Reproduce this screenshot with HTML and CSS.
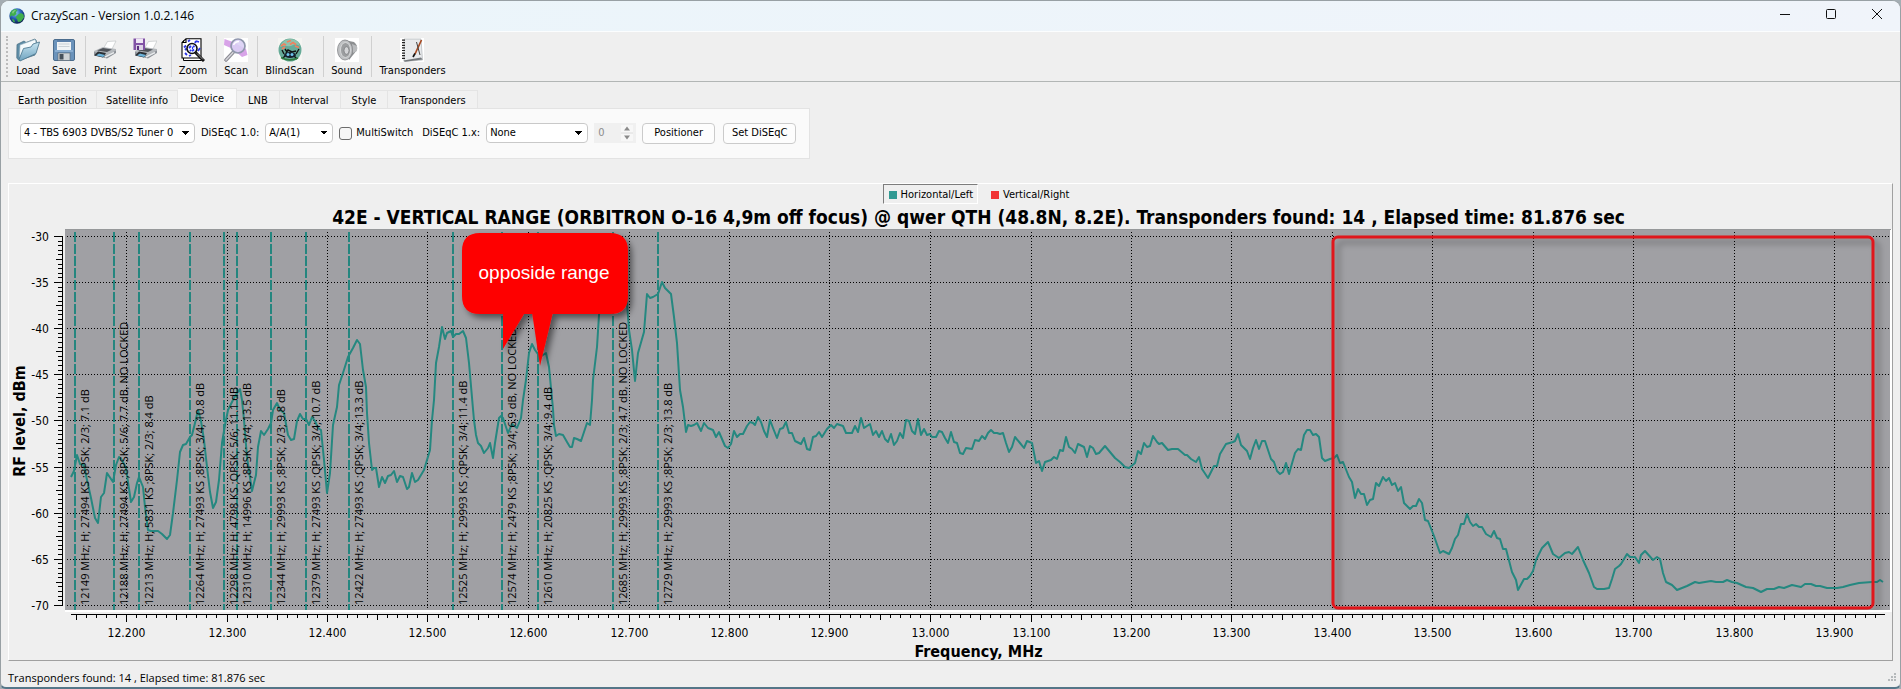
FILE: index.html
```html
<!DOCTYPE html>
<html lang="en">
<head>
<meta charset="utf-8">
<title>CrazyScan - Version 1.0.2.146</title>
<link rel="stylesheet" href="styles.css">
</head>
<body>
<div class="window">
  <header class="titlebar">
    <svg class="app-icon" viewBox="0 0 16 16" aria-hidden="true">
      <defs><radialGradient id="globe" cx=".4" cy=".3" r=".7"><stop offset="0" stop-color="#8fd0f0"/><stop offset=".5" stop-color="#2a64b8"/><stop offset="1" stop-color="#0b1f52"/></radialGradient></defs>
      <circle cx="8" cy="8" r="7.7" fill="url(#globe)"/>
      <path d="M2 3.500Q4 .8 7 1L8.500 2.500 7 4 7.500 6 5 8 2.500 7.500 1 9Q.3 6 2 3.500ZM9 6.500l3-1.500 2.500 1.500.5 3-3 4-3 .5-1-3-1.500-1.500ZM3 11l2 .5 1 2.500-1 .6Q3.500 13.500 3 11Z" fill="#3fae4c"/>
      <path d="M3 4Q5 1.500 7 2L5 4 4 6Z" fill="#a8dca0" opacity=".7"/>
    </svg>
    <h1 class="app-title">CrazyScan - Version 1.0.2.146</h1>
    <div class="window-controls">
      <button class="win-btn" type="button" aria-label="Minimize"><svg viewBox="0 0 10 10"><path d="M0 5.500H10"/></svg></button>
      <button class="win-btn" type="button" aria-label="Maximize"><svg viewBox="0 0 10 10"><rect x=".5" y=".5" width="9" height="9" rx="1"/></svg></button>
      <button class="win-btn" type="button" aria-label="Close"><svg viewBox="0 0 10 10"><path d="M0 0 10 10M10 0 0 10"/></svg></button>
    </div>
  </header>

  <nav class="toolbar" aria-label="Main toolbar">
    <span class="grip"></span>
    <button class="tool" type="button">
      <svg viewBox="0 0 24 24"><defs><linearGradient id="fold" x2="0" y2="1"><stop offset="0" stop-color="#c9e6f2"/><stop offset="1" stop-color="#6fa3bf"/></linearGradient></defs>
        <path d="M1 6.500 8 3l2 1.500 9-3.500 1.500 2L19 17 3 22.500.8 20Z" fill="#5f8ea8" stroke="#4c7287" stroke-width=".8"/>
        <path d="M4 7 19 1.500 20 4 18 15 3.500 19Z" fill="#f5fafc" stroke="#9ab4c0" stroke-width=".6"/>
        <path d="M3 21.500 7.500 10.500 15 9 17 6 23.500 4 20 15.500 4 23Z" fill="url(#fold)" stroke="#527d94" stroke-width=".9"/></svg>
      <span>Load</span></button>
    <button class="tool" type="button">
      <svg viewBox="0 0 24 24"><rect x="1.500" y="1.500" width="21" height="21" rx="1.500" fill="#6b93bb" stroke="#4b6c8d"/>
        <rect x="5" y="2" width="14" height="10" fill="#f0f3f5"/><path d="M5 3H19" stroke="#5b7fa8" stroke-width="2"/><path d="M6.500 6h11M6.500 8.500h11" stroke="#c0c8ce" stroke-width=".8"/>
        <path d="M3 13h18" stroke="#a9c8e6"/><rect x="6" y="15" width="12" height="7.500" fill="#cfd3d6" stroke="#55616b" stroke-width=".6"/><rect x="7.500" y="16" width="4" height="5.500" fill="#46505a"/></svg>
      <span>Save</span></button>
    <span class="sep"></span>
    <button class="tool" type="button">
      <svg viewBox="0 0 24 24"><g id="printer"><path d="M9 13 14.500 3.500 23 3 18.500 12Z" fill="#fff" stroke="#b9bdc0" stroke-width=".6"/><path d="M1 13 10 9 23 11 23 14 14 20 1 16Z" fill="#b4b8bc"/><path d="M4 12.500 10 10 19 11.500 14 14Z" fill="#50545a"/><path d="M1 14 14 17 23 12.500V15L14 20.500 1 17Z" fill="#8d9298"/><path d="M5 13.500 13 15 10 19.500 1 17.500Z" fill="#2a2e33"/><path d="M6 15.500 12 17 10 19 3 17.500Z" fill="#6bb2d8"/><path d="M12 19 21 14.500" stroke="#e6e8ea" stroke-width="1.500"/></g></svg>
      <span>Print</span></button>
    <button class="tool" type="button">
      <svg viewBox="0 0 24 24"><use href="#printer" x="1"/><path d="M.5.5H12V12H.5Z" fill="#8152a5"/><rect x="3" y=".5" width="7" height="4.500" fill="#efe6f5"/><rect x="3" y="7" width="7" height="5" fill="#dcd2e5"/><rect x="4" y="8" width="2" height="4" fill="#5b2f80"/></svg>
      <span>Export</span></button>
    <span class="sep"></span>
    <button class="tool" type="button">
      <svg viewBox="0 0 24 24"><path d="M2.500 2.500V22.500H20.500V20" fill="#fff" stroke="#000"/><path d="M5 .7H20V20H1V4.500ZM1 4.500H5V.7" fill="#fff" stroke="#000" stroke-width="1.100"/><path d="M7 3.500l2-1.500M15 3l3 1M3 9.500l2-2M4 15l2 2M8 18l2-1M17 13l2-3M14 5l1-2M4 12l1.500-1.500" stroke="#2b35e8" stroke-width="1.800"/><circle cx="11" cy="10.500" r="5" fill="#eef3ff" stroke="#111" stroke-width="1.600"/><path d="M8 10l2-2M11 13l2-1.500M12 8l1.500 1M9 12l1 1M11 10h1" stroke="#2734ee" stroke-width="1.800"/><path d="M14.500 14.500 23 23" stroke="#111" stroke-width="3"/><path d="M16 15.500 22 21.500" stroke="#a9a9a9" stroke-width=".9"/></svg>
      <span>Zoom</span></button>
    <span class="sep"></span>
    <button class="tool" type="button">
      <svg viewBox="0 0 24 24"><rect width="24" height="24" fill="#fff"/><path d="M.5 1 9 4 22 11 23.500 17 18 19 9 11 0 7Z" fill="#d8a3e8"/><path d="M9 14.500 2 22" stroke="#8c8c94" stroke-width="3.600" stroke-linecap="round"/><path d="M9 14.500 2 22" stroke="#d6d6dc" stroke-width="1.400" stroke-linecap="round"/><circle cx="14" cy="8" r="7" fill="#d9cff4" fill-opacity=".88" stroke="#9097ad" stroke-width="1.700"/><path d="M9.500 7Q11 3.500 15 3.500" fill="none" stroke="#fff" stroke-width="1.500"/></svg>
      <span>Scan</span></button>
    <span class="sep"></span>
    <button class="tool" type="button">
      <svg viewBox="0 0 24 24"><rect width="24" height="24" fill="#f5f5f2"/><circle cx="12" cy="12" r="11.500" fill="#66aa98"/><path d="M2 9Q5 1 12 1Q20 1 22 8Q18 5 15 7T9 8T2 9Z" fill="#8ec3ae"/><path d="M3 8l3-2 2 1M9 4l4-1.500M12 6.500l3-2 3 2M17 8l4 1.500M4 11l3-2" stroke="#ef805f" stroke-width="1.800" fill="none"/><path d="M6 16l-2-4M8 15l2-3 4 2 4-1M18 16l3-5M7 18l-3 3M16 18l3 3M9 14l-2-3" stroke="#111" stroke-width="1.400" fill="none"/><ellipse cx="12" cy="17" rx="6" ry="3" fill="#15202c"/><circle cx="10" cy="16.500" r="1.500" fill="#6fc5ef"/><circle cx="14" cy="16.500" r="1.500" fill="#6fc5ef"/><path d="M3 19.500Q11 24 20 20" stroke="#2f7a3f" stroke-width="1.600" fill="none"/></svg>
      <span>BlindScan</span></button>
    <span class="sep"></span>
    <button class="tool" type="button">
      <svg viewBox="0 0 24 24"><rect width="24" height="24" fill="#fff"/><path d="M9 2 19 4Q23 7 22 12L14 22Z" fill="#8d8f91"/><path d="M17 6l5 2v5l-4 2Z" fill="#b9bbbd"/><ellipse cx="10" cy="12" rx="7.500" ry="10" fill="#bfc1c3" stroke="#85878a" stroke-width=".8"/><ellipse cx="10.500" cy="12" rx="5" ry="7.500" fill="#9c9ea0" stroke="#d9dadb" stroke-width=".9"/><ellipse cx="11.500" cy="12.500" rx="2.500" ry="3.800" fill="#d3d4d6" stroke="#77797b" stroke-width=".7"/></svg>
      <span>Sound</span></button>
    <span class="sep"></span>
    <button class="tool" type="button">
      <svg viewBox="0 0 24 24"><rect width="24" height="24" fill="#fff"/><path d="M4 1H21L22.500 22 4 23.500Z" fill="#e8eaec" stroke="#b0b4b8" stroke-width=".7"/><path d="M3.500 22.500 21 19.500 22.500 21.500 5 23.800Z" fill="#74787c"/><path d="M3.500 1.500V22" stroke="#222" stroke-width="3" stroke-dasharray="1.200 1.400"/><path d="M21.500 2 15 16" stroke="#a64a22" stroke-width="1.700"/><path d="M16.500 4 20 17" stroke="#444" stroke-width="1"/><path d="M15 15.500l-2 3.500" stroke="#111" stroke-width="1.700"/></svg>
      <span>Transponders</span></button>
  </nav>

  <main class="content">
    <div class="tabs" role="tablist">
      <button class="tab" role="tab" type="button">Earth position</button>
      <button class="tab" role="tab" type="button">Satellite info</button>
      <button class="tab tab-active" role="tab" type="button" aria-selected="true">Device</button>
      <button class="tab" role="tab" type="button">LNB</button>
      <button class="tab" role="tab" type="button">Interval</button>
      <button class="tab" role="tab" type="button">Style</button>
      <button class="tab" role="tab" type="button">Transponders</button>
    </div>
    <form class="panel">
      <select class="field tuner" aria-label="Tuner"><option>4 - TBS 6903 DVBS/S2 Tuner 0</option></select>
      <label for="diseqc10">DiSEqC 1.0:</label>
      <select class="field port" id="diseqc10"><option>A/A(1)</option></select>
      <label class="check"><input type="checkbox"> MultiSwitch</label>
      <label for="diseqc1x">DiSEqC 1.x:</label>
      <select class="field mode" id="diseqc1x"><option>None</option></select>
      <span class="spin"><input type="text" value="0" disabled aria-label="Position"><svg viewBox="0 0 12 16" aria-hidden="true"><path d="M0 8H12" stroke="#dcdcdc"/><path d="M6 1.500 9 5.500H3ZM6 14.500 9 10.500H3Z" fill="#8a8a8a"/></svg></span>
      <button class="push" type="button">Positioner</button>
      <button class="push" type="button">Set DiSEqC</button>
    </form>

    <section class="chart">
      <div class="legend">
        <button class="key key-on" type="button"><i class="swatch teal"></i>Horizontal/Left</button>
        <button class="key" type="button"><i class="swatch red"></i>Vertical/Right</button>
      </div>
      <h2 class="chart-title">42E - VERTICAL RANGE (ORBITRON O-16 4,9m off focus) @ qwer QTH (48.8N, 8.2E). Transponders found: 14 , Elapsed time: 81.876 sec</h2>
      <svg class="plot" viewBox="9 229 1883 412" role="img" aria-label="RF level by frequency">
        <defs>
          <filter id="shade" x="-10%" y="-10%" width="125%" height="125%"><feDropShadow dx="4" dy="4" stdDeviation="3" flood-color="#000" flood-opacity=".5"/></filter>
          <filter id="soft" x="-3%" y="-3%" width="106%" height="106%"><feDropShadow dx="5" dy="5" stdDeviation="3" flood-color="#000" flood-opacity=".32"/></filter>
          <clipPath id="area"><rect x="65" y="230" width="1825" height="380"/></clipPath>
        </defs>
        <rect x="65" y="229" width="1827" height="383" fill="#fff"/>
        <rect x="65" y="229" width="1826" height="1" fill="#96989a"/>
        <rect x="65" y="230" width="1825" height="380" fill="#a0a0a4"/>
        <g id="grid" class="grid"></g>
        <g id="axes" class="axes"></g>
        <g id="ticks" class="tick-text"></g>
        <g id="markers" class="markers"></g>
        <path id="curve" class="curve"/>
        <g id="notes" class="notes"></g>
        <text class="axis-title" text-anchor="middle" transform="translate(25 421) rotate(-90)">RF level, dBm</text>
        <g clip-path="url(#area)"><rect class="zone" x="1333" y="237" width="540" height="371" rx="5" filter="url(#soft)"/></g>
        <g filter="url(#shade)" fill="#fe0000">
          <path d="M532 312H553L540 366Z"/>
          <path d="M480 233H610Q628 233 628 251V296Q628 314 610 314H524L503 349V314H480Q462 314 462 296V251Q462 233 480 233Z"/>
        </g>
        <text class="callout" x="544" y="279" text-anchor="middle">opposide range</text>
      </svg>
      <p class="x-title">Frequency, MHz</p>
    </section>
  </main>

  <footer class="status">
    <span>Transponders found: 14 , Elapsed time: 81.876 sec</span>
    <svg class="size-grip" viewBox="0 0 9 9" aria-hidden="true"><path d="M7 1h2M4 4h2M7 4h2M1 7h2M4 7h2M7 7h2" stroke="#b5b9bb" stroke-width="2"/></svg>
  </footer>
</div>
<script src="chart.js"></script>
</body>
</html>
```

FILE: styles.css
```css
* { box-sizing: border-box; }

body {
  margin: 0;
  background: #a4adb3;
  color: #000;
  font: 11px/14px "DejaVu Sans Condensed", "DejaVu Sans", sans-serif;
}

button, select, input { font: inherit; color: inherit; }
button { background: none; border: 0; padding: 0; }

.window {
  display: flex;
  flex-direction: column;
  min-height: 100vh;
  border: 1px solid #98a0a4;
  border-bottom: 2px solid #557688;
  border-radius: 9px 9px 6px 6px;
  background: #efefef;
  overflow: hidden;
}

.titlebar {
  display: flex;
  align-items: center;
  height: 31px;
  padding-left: 8px;
  border-bottom: 1px solid #fbfdfe;
  background: linear-gradient(90deg, #eaf5fa, #f0f4fa);
}
.app-icon { width: 16px; height: 16px; }
.app-title {
  margin: 0 0 0 6px;
  font: 400 12px/16px "Open Sans", "Noto Sans", sans-serif;
}
.window-controls { display: flex; margin-left: auto; }
.win-btn { width: 46px; height: 28px; }
.win-btn svg {
  width: 10px;
  height: 10px;
  fill: none;
  stroke: #111;
  overflow: visible;
}

.toolbar {
  display: flex;
  align-items: stretch;
  height: 50px;
  padding: 4px 5px;
  border-bottom: 1px solid #b2b6b5;
}
.grip { width: 1px; margin-right: 2px; border-left: 2px dotted #bcbcbc; }
.sep { width: 1px; margin: 0 1px 0 3px; background: #d0d0d0; }
.tool {
  display: flex;
  flex-direction: column;
  align-items: center;
  padding: 2px 6px 0;
}
.tool svg { width: 24px; height: 24px; flex: none; }
.tool span { line-height: 17px; }

.content { flex: 1; padding: 6px 7px 0; }

.tabs { display: flex; align-items: flex-end; height: 20px; padding-left: 1px; }
.tab {
  height: 18px;
  padding: 2px 9px 0;
  border: 1px solid #e4e4e4;
  border-width: 1px 1px 0 0;
  background: #f1f1f1;
}
.tab-active { height: 20px; padding: 0 12px; background: #fafafa; }
.tab-active ~ .tab { padding: 2px 11px 0; }

.panel {
  display: flex;
  align-items: center;
  gap: 6px;
  width: fit-content;
  height: 51px;
  padding: 0 13px 1px 11px;
  border: 1px solid #e3e3e3;
  background: #fafafa;
}
.field {
  height: 20px;
  padding: 0 16px 0 3px;
  border: 1px solid #c9c9c9;
  border-radius: 4px;
  appearance: none;
  background:
    linear-gradient(to bottom right, #000 50%, transparent 50%) right 4px center / 4px 4px no-repeat,
    linear-gradient(to bottom left, #000 50%, transparent 50%) right 8px center / 4px 4px no-repeat,
    #fff;
}
.tuner { width: 175px; }
.port { width: 68px; }
.mode { width: 102px; }
.check { display: flex; align-items: center; gap: 4px; margin-right: 3px; }
.check input {
  width: 13px;
  height: 13px;
  margin: 0;
  border: 1px solid #6c6c6c;
  border-radius: 3px;
  appearance: none;
  background: #f6f6f6;
}
.spin {
  display: flex;
  align-items: center;
  width: 42px;
  height: 20px;
  padding-right: 3px;
  background: #f0f0f0;
}
.spin input {
  flex: 1;
  min-width: 0;
  padding: 0 4px;
  border: 0;
  background: none;
  color: #8c8c8c;
}
.spin svg { width: 12px; height: 16px; flex: none; background: #f7f7f7; }
.push {
  width: 73px;
  height: 21px;
  border: 1px solid #cbcbcb;
  border-radius: 4px;
  background: #fdfdfd;
}
.push + .push { margin-left: 2px; }

.chart {
  margin-top: 24px;
  border: 1px solid #fff;
  border-right-color: #a0a0a0;
  border-bottom-color: #a0a0a0;
}
.legend {
  display: flex;
  justify-content: center;
  gap: 7px;
  height: 22px;
  padding: 0 0 2px 56px;
}
.key { display: flex; align-items: center; gap: 4px; padding: 1px 4px 0 5px; border: 1px solid transparent; }
.key-on { border-color: #7d7d7d #fff #fff #7d7d7d; }
.swatch { width: 8px; height: 8px; }
.teal { background: #319a93; }
.red { background: #f13536; }
.chart-title {
  margin: 0;
  padding-left: 56px;
  font: 700 19px/23px "DejaVu Sans Condensed", "DejaVu Sans", sans-serif;
  text-align: center;
  white-space: nowrap;
}
.plot { display: block; width: 100%; height: auto; }
.x-title {
  margin: 0;
  padding: 2px 0 0 56px;
  font-weight: 700;
  font-size: 16px;
  line-height: 17px;
  text-align: center;
}

.grid line { stroke: #000; stroke-dasharray: 1 2; }
.axes line { stroke: #000; shape-rendering: crispEdges; }
.tick-text { font-size: 12px; }
.markers line { stroke: #25867f; stroke-width: 2; stroke-dasharray: 10 2; }
.curve { fill: none; stroke: #258880; stroke-width: 2; stroke-linejoin: round; }
.notes { font: 11px "Open Sans", "Noto Sans", sans-serif; }
.axis-title { font-size: 16px; font-weight: 700; }
.zone { fill: none; stroke: #e0161c; stroke-width: 3; }
.callout { fill: #fff; font: 19px "Liberation Sans", Arial, sans-serif; }

.status {
  display: flex;
  align-items: center;
  justify-content: space-between;
  height: 25px;
  padding: 6px 4px 0 7px;
  font: 11px/16px "Open Sans", "Noto Sans", sans-serif;
}
.size-grip { width: 9px; height: 9px; }
```

FILE: chart.js
```js
const NS = 'http://www.w3.org/2000/svg';
const byId = (id) => document.getElementById(id);
const xOf = (mhz) => Math.round(126 + (mhz - 12200) * 1.005) + 0.5;
const yOf = (db) => Math.round(236 + (-30 - db) * 9.22) + 0.5;

function line(parent, x1, y1, x2, y2) {
  const el = document.createElementNS(NS, 'line');
  Object.entries({ x1, y1, x2, y2 }).forEach(([k, v]) => el.setAttribute(k, v));
  byId(parent).appendChild(el);
}

function text(parent, str, attrs) {
  const el = document.createElementNS(NS, 'text');
  Object.entries(attrs).forEach(([k, v]) => el.setAttribute(k, v));
  el.textContent = str;
  byId(parent).appendChild(el);
}

// Level axis: a tick every 0.5 dB, labelled every 5 dB.
line('axes', 62.5, 236, 62.5, 606);
for (let i = 0; i <= 80; i++) {
  const db = -30 - i / 2;
  const y = yOf(db);
  const len = i % 10 === 0 ? 8 : i % 5 === 0 ? 6 : 4;
  line('axes', 62 - len, y, 62, y);
  if (i % 10 === 0) {
    line('grid', 67, y, 1890, y);
    text('ticks', String(db), { x: 49, y: y + 4, 'text-anchor': 'end' });
  }
}

// Frequency axis: a tick every 10 MHz, labelled every 100 MHz.
line('axes', 71, 614.5, 1885, 614.5);
for (let mhz = 12150; mhz <= 13940; mhz += 10) {
  const x = xOf(mhz);
  const len = mhz % 100 === 0 ? 7 : mhz % 50 === 0 ? 5 : 3;
  line('axes', x, 615, x, 615 + len);
  if (mhz % 100 === 0) {
    line('grid', x, 232, x, 610);
    text('ticks', (mhz / 1000).toFixed(3), { x, y: 637, 'text-anchor': 'middle' });
  }
}

const transponders = [
  [12149, '27494 KS ;8PSK; 2/3; 7.1 dB'],
  [12188, '27494 KS ;8PSK; 5/6; 7.7 dB, NO LOCKED'],
  [12213, '5831 KS ;8PSK; 2/3; 8.4 dB'],
  [12264, '27493 KS ;8PSK; 3/4; 10.8 dB'],
  [12298, '4798 KS ;QPSK; 5/6; 11.1 dB'],
  [12310, '14996 KS ;8PSK; 3/4; 13.5 dB'],
  [12344, '29993 KS ;8PSK; 2/3; 9.8 dB'],
  [12379, '27493 KS ;QPSK; 3/4; 10.7 dB'],
  [12422, '27493 KS ;QPSK; 3/4; 13.3 dB'],
  [12525, '29993 KS ;QPSK; 3/4; 11.4 dB'],
  [12574, '2479 KS ;8PSK; 3/4; 6.9 dB, NO LOCKED'],
  [12610, '20825 KS ;QPSK; 3/4; 9.4 dB'],
  [12685, '29993 KS ;8PSK; 2/3; 4.7 dB, NO LOCKED'],
  [12729, '29993 KS ;8PSK; 2/3; 13.8 dB']
];
transponders.forEach(([mhz, info]) => {
  const x = Math.round(xOf(mhz) - 0.5);
  line('markers', x, 232, x, 610);
  text('notes', mhz + ' MHz; H; ' + info, { transform: 'translate(' + (x + 14) + ' 605) rotate(-90)' });
});

const samples = `71,477 74,471 77,455 80,464 84,465 87,480 91,498 95,518 98,523 101,497 104,493 107,473 113,482 116,465
119,457 122,460 126,468 128,482 131,502 134,497 137,483 139,477 143,487 145,507 148,530 151,531 158,531 162,534 167,539
170,535 173,513 177,480 180,452 183,445 186,444 190,437 192,435 195,423 198,410 201,421 204,440 207,467 210,492 213,508
216,502 219,480 222,443 225,425 228,410 231,404 234,398 237,393 240,389 242,400 244,420 247,457 252,491 256,475 258,447
261,431 264,435 268,429 271,423 273,410 277,403 280,410 284,413 288,435 291,440 294,439 297,421 300,414 303,419 306,419
309,425 312,417 315,421 318,428 321,430 324,460 327,493 330,473 333,425 337,407 339,385 343,373 348,357 353,348 357,340
360,344 363,370 366,387 367,413 369,443 372,470 374,468 376,468 379,487 382,477 385,483 388,476 391,475 394,471 397,482
400,476 403,477 407,489 409,487 412,473 415,482 418,480 424,470 427,460 430,450 432,420 434,400 436,363 439,347 442,327
445,339 447,333 451,331 453,337 456,334 459,334 463,331 466,338 469,363 473,409 474,420 476,435 478,443 481,446 484,453
488,448 490,443 493,458 495,443 499,418 501,416 503,418 508,433 512,424 517,428 521,418 523,400 526,380 529,353 532,344
535,350 540,357 546,353 549,367 553,409 554,425 556,436 559,434 563,435 567,442 570,447 572,447 574,438 577,439 581,441
584,432 587,423 590,425 592,400 593,380 597,347 599,315 602,290 612,275 625,285 627,303 629,330 632,350 635,381 638,353
644,332 647,294 650,298 653,297 658,294 662,282 665,288 671,294 674,317 677,343 680,390 683,407 686,432 688,425 691,426
694,425 697,423 701,431 704,423 708,428 713,430 716,437 719,432 725,446 728,448 731,444 734,431 737,437 740,434 743,434
747,426 750,422 753,423 755,425 758,417 761,422 764,431 767,437 770,420 773,428 777,438 780,429 783,428 786,422 789,433
792,433 795,441 801,444 804,438 807,449 810,450 813,437 816,436 819,432 822,437 827,429 831,425 834,428 837,424 843,426
846,433 852,433 855,426 858,432 861,418 864,428 870,424 873,435 876,431 879,437 882,431 885,439 888,442 891,434 894,445
897,441 900,433 903,438 906,420 909,421 912,431 915,434 918,419 921,435 924,429 927,435 930,434 932,437 936,437 939,431
942,432 945,438 948,443 951,432 954,442 957,443 960,453 963,454 966,448 972,449 975,440 979,441 982,436 985,439 988,433
991,430 994,433 997,433 1000,434 1003,433 1006,443 1009,452 1012,447 1015,437 1020,443 1024,448 1027,441 1032,443
1036,463 1039,461 1042,471 1045,462 1051,460 1054,457 1057,459 1060,450 1063,451 1066,437 1069,447 1072,449 1075,453
1078,444 1084,447 1087,457 1090,446 1093,448 1096,454 1099,453 1105,446 1110,452 1115,458 1120,462 1125,467 1129,468
1135,463 1138,451 1141,454 1144,443 1147,447 1150,446 1153,436 1157,442 1159,444 1162,443 1168,450 1172,449 1178,449
1185,455 1187,455 1191,459 1196,462 1199,457 1202,469 1208,478 1214,466 1217,466 1220,454 1226,444 1233,442 1235,441
1238,434 1241,445 1247,451 1250,459 1253,448 1256,440 1259,449 1262,441 1265,441 1271,459 1274,462 1277,471 1280,474
1283,472 1286,463 1289,474 1295,453 1298,449 1301,450 1304,435 1307,430 1310,430 1313,435 1316,434 1319,437 1322,458
1325,461 1330,459 1334,458 1337,455 1340,463 1343,462 1349,477 1352,482 1355,498 1358,489 1361,494 1364,494 1367,505
1370,500 1373,499 1376,483 1379,486 1383,477 1386,481 1389,478 1392,485 1395,483 1398,491 1401,487 1404,503 1410,509
1413,506 1416,506 1419,499 1422,503 1425,520 1428,521 1434,536 1440,553 1443,551 1449,554 1452,548 1455,539 1458,535
1461,524 1464,524 1467,514 1470,522 1473,526 1476,524 1479,527 1482,527 1486,534 1491,537 1494,531 1497,538 1500,539
1503,549 1506,549 1512,572 1516,580 1518,590 1524,579 1527,579 1530,576 1533,571 1536,560 1542,548 1548,542 1553,554
1559,558 1565,553 1569,552 1572,554 1578,547 1583,560 1589,573 1594,587 1597,589 1604,589 1609,588 1612,579 1615,569
1619,566 1621,564 1627,554 1630,557 1635,557 1639,563 1641,555 1645,551 1653,560 1657,557 1660,559 1663,573 1666,582
1672,585 1677,590 1687,586 1695,582 1699,583 1711,581 1716,582 1723,582 1727,580 1732,582 1737,583 1746,587 1753,588
1761,592 1767,589 1774,589 1779,587 1784,588 1792,585 1801,587 1805,584 1811,584 1816,586 1820,586 1827,588 1837,588
1843,587 1850,585 1859,583 1872,582 1877,582 1880,580 1883,582`;
byId('curve').setAttribute('d', 'M' + samples.trim().split(/\s+/).join('L'));
```
